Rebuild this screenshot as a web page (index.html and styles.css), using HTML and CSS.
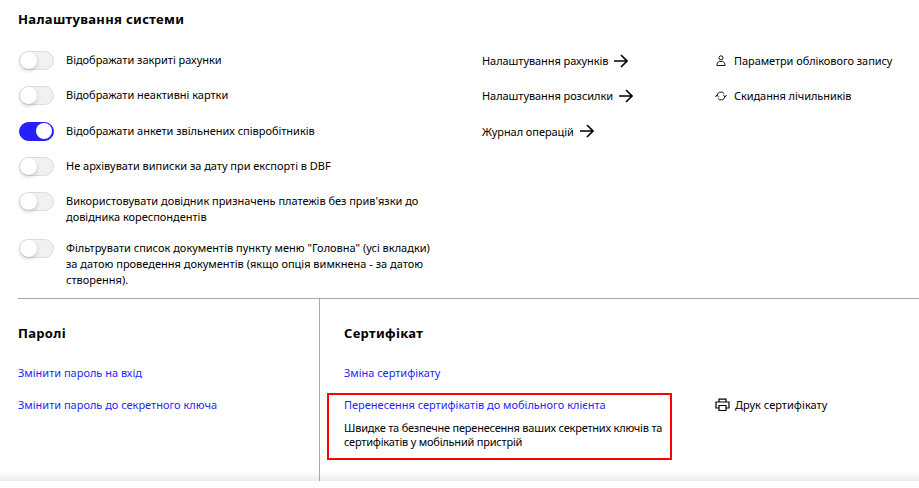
FILE: index.html
```html
<!DOCTYPE html>
<html lang="uk">
<head>
<meta charset="utf-8">
<title>Налаштування системи</title>
<link rel="stylesheet" href="styles.css">
</head>
<body>
<main class="page">
  <section class="system">
    <h2>Налаштування системи</h2>
    <div class="columns">
      <ul class="options">
        <li><span class="switch"></span><span>Відображати закриті рахунки</span></li>
        <li><span class="switch"></span><span>Відображати неактивні картки</span></li>
        <li><span class="switch on"></span><span>Відображати анкети звільнених співробітників</span></li>
        <li><span class="switch"></span><span>Не архівувати виписки за дату при експорті в DBF</span></li>
        <li><span class="switch"></span><span>Використовувати довідник призначень платежів без прив'язки до<br>довідника кореспондентів</span></li>
        <li><span class="switch"></span><span>Фільтрувати список документів пункту меню "Головна" (усі вкладки)<br>за датою проведення документів (якщо опція вимкнена - за датою<br>створення).</span></li>
      </ul>
      <ul class="links">
        <li><span>Налаштування рахунків</span><svg class="arrow" viewBox="0 0 14 14"><path d="M0 7h13M7 1l6 6-6 6"/></svg></li>
        <li><span>Налаштування розсилки</span><svg class="arrow" viewBox="0 0 14 14"><path d="M0 7h13M7 1l6 6-6 6"/></svg></li>
        <li><span>Журнал операцій</span><svg class="arrow" viewBox="0 0 14 14"><path d="M0 7h13M7 1l6 6-6 6"/></svg></li>
      </ul>
      <ul class="links actions">
        <li><svg class="icon" viewBox="0 0 12 12"><circle cx="6" cy="2.800" r="2"/><path d="M4.500 6.300C2.900 6.800 1.900 8.200 1.900 10.500h8.200c0-2.300-1-3.700-2.600-4.200a4 4 0 0 1-3 0z"/></svg><span>Параметри облікового запису</span></li>
        <li><svg class="icon" viewBox="0 0 12 12"><path d="M2 6.500V6a4 4 0 0 1 7.200-2.400M10 5.500V6a4 4 0 0 1-7.200 2.400M.3 6.800L2 5.100l1.700 1.700M8.300 5.200L10 6.900l1.700-1.700"/></svg><span>Скидання лічильників</span></li>
      </ul>
    </div>
  </section>
  <div class="lower">
    <section class="passwords">
      <h2>Паролі</h2>
      <a>Змінити пароль на вхід</a>
      <a>Змінити пароль до секретного ключа</a>
    </section>
    <section class="certificate">
      <div class="cert-main">
        <h2>Сертифікат</h2>
        <a>Зміна сертифікату</a>
        <div class="highlight">
          <a>Перенесення сертифікатів до мобільного клієнта</a>
          <p>Швидке та безпечне перенесення ваших секретних ключів та<br>сертифікатів у мобільний пристрій</p>
        </div>
      </div>
      <div class="print"><svg class="printer" viewBox="0 0 15 14"><path d="M4 3.500V1.200h7v2.300M3.800 10H1V4h13v6h-2.800M4 7.500h7v5H4z"/></svg><span>Друк сертифікату</span></div>
    </section>
  </div>
</main>
</body>
</html>
```

FILE: styles.css
```css
* { box-sizing: border-box; }
body {
  margin: 0;
  background: #fff;
  color: #000;
  font: 11px/16px "Noto Sans", "Open Sans", sans-serif;
  white-space: nowrap;
}
ul { list-style: none; margin: 0; padding: 0; }
h2 { margin: 0; font-size: 13px; line-height: 20px; font-weight: 700; letter-spacing: .32px; }
a { display: block; color: #261fff; letter-spacing: -.01px; }
svg { fill: none; stroke: #000; flex: none; }
.page {
  height: 481px;
  overflow: hidden;
  background: linear-gradient(#fff, #ececec) bottom / 100% 10px no-repeat;
}
.system { height: 299px; margin-left: 18px; padding-top: 9px; border-bottom: 1px solid #a1a8b0; }
.columns { display: grid; grid-template-columns: 464px 233px 1fr; margin-top: 22px; }
.options li { display: flex; gap: 12px; min-height: 20.250px; margin-bottom: 15px; padding: 1px 0 0 1px; }
.options li:nth-child(n+5) { min-height: 0; }
.options li:nth-child(5) { margin-bottom: 14px; }
.options li:nth-child(-n+5) { letter-spacing: -.02px; }
.switch {
  flex: none;
  width: 35px;
  height: 19px;
  margin-top: -1px;
  border: 1px solid #dcdcdc;
  border-radius: 10px;
  background: #f1f1f1;
}
.switch::before {
  content: "";
  display: block;
  width: 17px;
  height: 17px;
  border-radius: 50%;
  background: #fff;
  box-shadow: 0 2px 4px rgba(0, 0, 0, .18);
}
.switch.on { border-color: #261fff; background: #261fff; }
.switch.on::before { width: 16px; height: 16px; margin: .5px 0 0 15.500px; box-shadow: none; }
.links li { display: flex; align-items: center; height: 20.250px; margin-bottom: 15px; letter-spacing: -.07px; }
.arrow { width: 14px; height: 14px; margin: -1px 0 0 6px; stroke-width: 1.600; }
.icon { width: 12px; height: 12px; margin-right: 7px; stroke-width: .9; }
.lower { display: flex; height: 182px; margin-left: 18px; }
.passwords { width: 302px; padding-top: 24px; border-right: 1px solid #a1a8b0; }
.passwords a { margin-top: 22px; }
.passwords a + a { margin-top: 16px; }
.certificate { display: flex; align-items: flex-start; padding: 24px 0 0 24px; }
.cert-main { width: 371px; }
.cert-main > a { margin-top: 22px; }
.highlight { width: 345px; height: 67px; margin: 12px 0 0 -17px; padding: 2px 15px; border: 2px solid #f00; }
.highlight p { margin: 8px 0 0; line-height: 14px; letter-spacing: -.21px; }
.print { display: flex; align-items: center; margin-top: 74px; letter-spacing: .03px; }
.printer { width: 15px; height: 14px; margin-right: 5px; stroke-width: 1.200; }
```
